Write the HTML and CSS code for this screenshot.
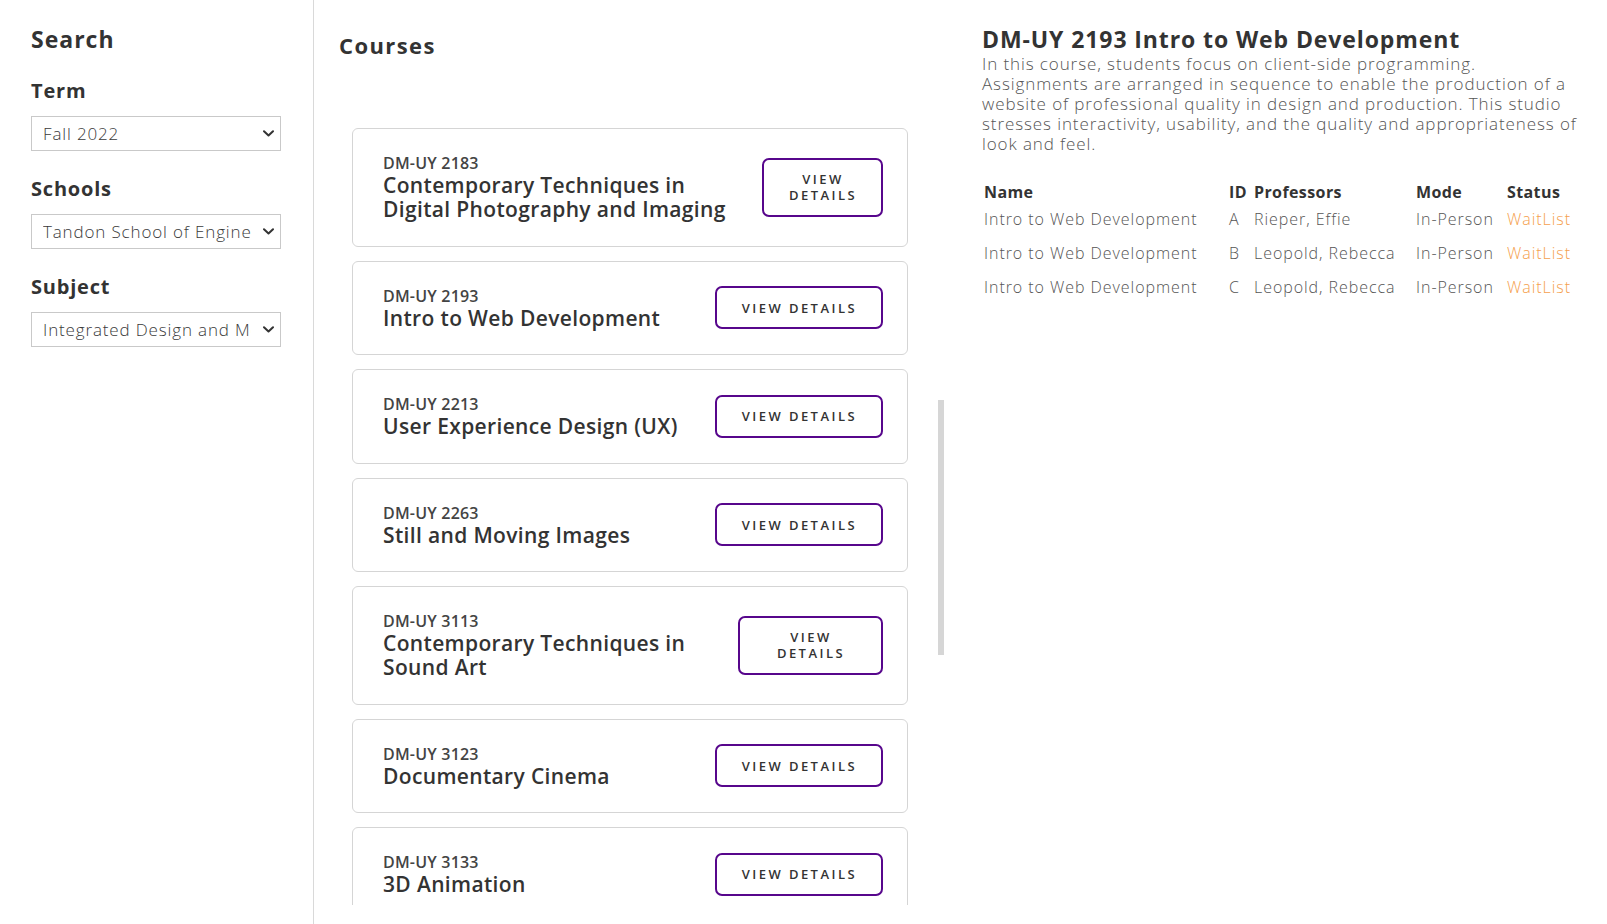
FILE: index.html
```html
<!DOCTYPE html>
<html lang="en">
<head>
<meta charset="utf-8">
<title>Course Search</title>
<link rel="stylesheet" href="styles.css">
</head>
<body>
<div class="app">
  <aside class="sidebar">
    <h1 class="sidebar-title">Search</h1>
    <h2 class="field-label">Term</h2>
    <div class="select-wrap">
      <select class="field-select">
        <option>Fall 2022</option>
      </select>
      <svg class="select-arrow" width="11" height="7" viewBox="0 0 11 7" aria-hidden="true"><path d="M1 1.2l4.5 4.3L10 1.2" fill="none" stroke="#333" stroke-width="2" stroke-linecap="round" stroke-linejoin="round"/></svg>
    </div>
    <h2 class="field-label">Schools</h2>
    <div class="select-wrap">
      <select class="field-select">
        <option>Tandon School of Engineering</option>
      </select>
      <svg class="select-arrow" width="11" height="7" viewBox="0 0 11 7" aria-hidden="true"><path d="M1 1.2l4.5 4.3L10 1.2" fill="none" stroke="#333" stroke-width="2" stroke-linecap="round" stroke-linejoin="round"/></svg>
    </div>
    <h2 class="field-label">Subject</h2>
    <div class="select-wrap">
      <select class="field-select">
        <option>Integrated Design and Media</option>
      </select>
      <svg class="select-arrow" width="11" height="7" viewBox="0 0 11 7" aria-hidden="true"><path d="M1 1.2l4.5 4.3L10 1.2" fill="none" stroke="#333" stroke-width="2" stroke-linecap="round" stroke-linejoin="round"/></svg>
    </div>
  </aside>

  <main class="courses">
    <h2 class="courses-title">Courses</h2>
    <div class="course-list">
      <div class="course-card">
        <div class="course-text">
          <div class="course-code">DM-UY 2183</div>
          <div class="course-name">Contemporary Techniques in Digital Photography and Imaging</div>
        </div>
        <button class="details-btn">View Details</button>
      </div>
      <div class="course-card">
        <div class="course-text">
          <div class="course-code">DM-UY 2193</div>
          <div class="course-name">Intro to Web Development</div>
        </div>
        <button class="details-btn">View Details</button>
      </div>
      <div class="course-card">
        <div class="course-text">
          <div class="course-code">DM-UY 2213</div>
          <div class="course-name">User Experience Design (UX)</div>
        </div>
        <button class="details-btn">View Details</button>
      </div>
      <div class="course-card">
        <div class="course-text">
          <div class="course-code">DM-UY 2263</div>
          <div class="course-name">Still and Moving Images</div>
        </div>
        <button class="details-btn">View Details</button>
      </div>
      <div class="course-card">
        <div class="course-text">
          <div class="course-code">DM-UY 3113</div>
          <div class="course-name">Contemporary Techniques in Sound Art</div>
        </div>
        <button class="details-btn">View Details</button>
      </div>
      <div class="course-card">
        <div class="course-text">
          <div class="course-code">DM-UY 3123</div>
          <div class="course-name">Documentary Cinema</div>
        </div>
        <button class="details-btn">View Details</button>
      </div>
      <div class="course-card">
        <div class="course-text">
          <div class="course-code">DM-UY 3133</div>
          <div class="course-name">3D Animation</div>
        </div>
        <button class="details-btn">View Details</button>
      </div>
    </div>
    <div class="scroll-thumb"></div>
  </main>

  <section class="detail">
    <h2 class="detail-title">DM-UY 2193 Intro to Web Development</h2>
    <p class="detail-desc">In this course, students focus on client-side programming. Assignments are arranged in sequence to enable the production of a website of professional quality in design and production. This studio stresses interactivity, usability, and the quality and appropriateness of look and feel.</p>
    <table class="sections">
      <colgroup>
        <col class="col-name">
        <col class="col-id">
        <col class="col-prof">
        <col class="col-mode">
        <col class="col-status">
      </colgroup>
      <thead>
        <tr><th>Name</th><th>ID</th><th>Professors</th><th>Mode</th><th>Status</th></tr>
      </thead>
      <tbody>
        <tr><td>Intro to Web Development</td><td>A</td><td>Rieper, Effie</td><td>In-Person</td><td class="status">WaitList</td></tr>
        <tr><td>Intro to Web Development</td><td>B</td><td>Leopold, Rebecca</td><td>In-Person</td><td class="status">WaitList</td></tr>
        <tr><td>Intro to Web Development</td><td>C</td><td>Leopold, Rebecca</td><td>In-Person</td><td class="status">WaitList</td></tr>
      </tbody>
    </table>
  </section>
</div>
</body>
</html>
```

FILE: styles.css
```css
* { box-sizing: border-box; }

html, body {
  margin: 0;
  height: 100%;
}

body {
  font-family: "Open Sans", "Liberation Sans", sans-serif;
  color: #333;
  background: #fff;
  overflow: hidden;
}

.app {
  display: grid;
  grid-template-columns: 314px 668px 1fr;
  height: 100vh;
}

/* Sidebar */
.sidebar {
  border-right: 1px solid #d9d9d9;
  padding: 25px 0 0 31px;
}

.sidebar-title {
  margin: 0;
  font-size: 23px;
  line-height: 28px;
  font-weight: 700;
  letter-spacing: 1px;
  color: #333;
}

.field-label {
  margin: 26px 0 13px;
  font-size: 20px;
  line-height: 24px;
  font-weight: 700;
  letter-spacing: 0.8px;
  color: #333;
}

.select-wrap {
  position: relative;
  width: 250px;
}

.field-select {
  display: block;
  width: 250px;
  height: 35px;
  appearance: none;
  -webkit-appearance: none;
  border: 1px solid #c9c9c9;
  border-radius: 0;
  background: #fff;
  padding: 0 29px 0 11px;
  font-family: inherit;
  font-size: 17px;
  font-weight: 300;
  letter-spacing: 0.85px;
  color: #3a3a3a;
}

.select-arrow {
  position: absolute;
  right: 7px;
  top: 14px;
  pointer-events: none;
}

/* Courses column */
.courses {
  position: relative;
  display: flex;
  flex-direction: column;
  min-height: 0;
  overflow: hidden;
  padding: 31px 0 19px 25px;
}

.courses-title {
  margin: 0 0 69px;
  font-size: 22px;
  line-height: 28px;
  font-weight: 700;
  letter-spacing: 1.4px;
  color: #333;
}

.course-list {
  flex: 1;
  min-height: 0;
  overflow: hidden;
  width: 556px;
  margin-left: 13px;
  display: flex;
  flex-direction: column;
  gap: 14px;
}

.course-card {
  flex: none;
  display: flex;
  align-items: center;
  justify-content: space-between;
  gap: 26px;
  border: 1px solid #d5d5d5;
  border-radius: 6px;
  padding: 24.25px 24px 24.25px 30px;
}

.course-text {
  min-width: 0;
}

.course-code {
  font-size: 16px;
  line-height: 20px;
  font-weight: 600;
  letter-spacing: 0.2px;
  color: #444;
}

.course-name {
  font-size: 21px;
  line-height: 24px;
  font-weight: 600;
  letter-spacing: 0.35px;
  color: #333;
}

.details-btn {
  flex: 0 1 auto;
  border: 2px solid #57068c;
  border-radius: 7px;
  background: #fff;
  padding: 11.5px 24px 11.5px 25px;
  font-family: inherit;
  font-size: 13px;
  line-height: 16px;
  font-weight: 600;
  letter-spacing: 2.45px;
  text-transform: uppercase;
  text-align: center;
  white-space: normal;
  color: #333;
}

.scroll-thumb {
  position: absolute;
  left: 624px;
  top: 400px;
  width: 6px;
  height: 255px;
  background: #d6d6d6;
}

/* Detail column */
.detail {
  padding: 24.5px 25px 0 0;
}

.detail-title {
  margin: 0;
  font-size: 23px;
  line-height: 29.5px;
  font-weight: 700;
  letter-spacing: 0.9px;
  color: #333;
}

.detail-desc {
  margin: 0;
  font-size: 17px;
  line-height: 20px;
  font-weight: 300;
  letter-spacing: 0.9px;
  color: #555;
}

.sections {
  margin: 28px 0 0 2px;
  width: 594px;
  border-collapse: collapse;
  table-layout: fixed;
}

.col-name { width: 245px; }
.col-id { width: 25px; }
.col-prof { width: 162px; }
.col-mode { width: 91px; }

.sections th {
  padding: 0;
  text-align: left;
  font-size: 16px;
  line-height: 20px;
  font-weight: 700;
  letter-spacing: 0.4px;
  color: #333;
  white-space: nowrap;
}

.sections td {
  padding: 7px 0;
  font-size: 16px;
  line-height: 20px;
  font-weight: 300;
  letter-spacing: 0.95px;
  color: #555;
  white-space: nowrap;
}

.sections td.status {
  color: #f5a04e;
}
```
